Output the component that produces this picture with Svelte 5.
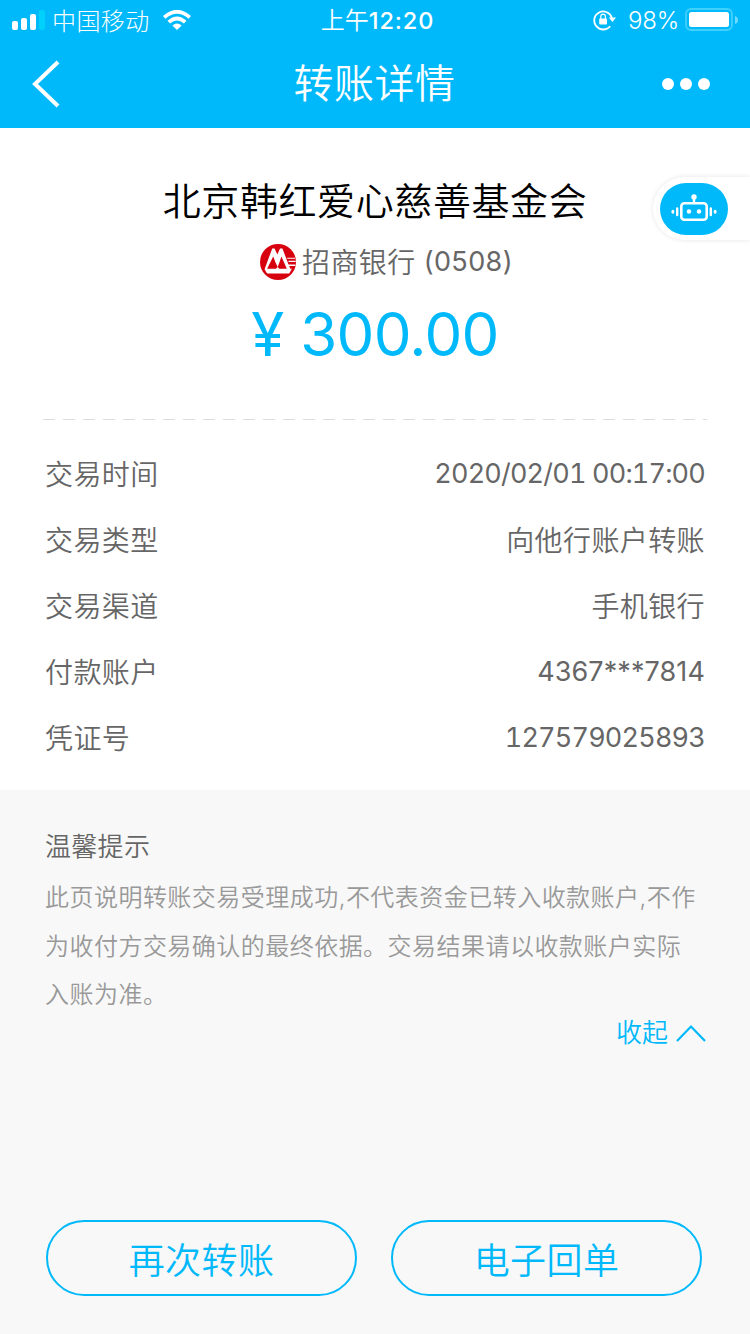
<script lang="ts">
	const rows = [
		{ label: '交易时间', value: '2020/02/01 00:17:00', kind: 'num' },
		{ label: '交易类型', value: '向他行账户转账', kind: 'text' },
		{ label: '交易渠道', value: '手机银行', kind: 'text' },
		{ label: '付款账户', value: '4367***7814', kind: 'masked' },
		{ label: '凭证号', value: '127579025893', kind: 'num' }
	];

	const tips = [
		'此页说明转账交易受理成功,不代表资金已转入收款账户,不作',
		'为收付方交易确认的最终依据。交易结果请以收款账户实际',
		'入账为准。'
	];

	let open = $state(true);
</script>

<div class="page">
	<header>
		<div class="statusbar">
			<div class="side">
				<svg class="signal" width="34" height="22" viewBox="0 0 34 22">
					<g fill="#fff">
						<rect x="0" y="12" width="6" height="9" rx="2" />
						<rect x="9" y="9" width="6" height="12" rx="2" />
						<rect x="18" y="5" width="6" height="16" rx="2" />
					</g>
					<rect x="27" y="1" width="6" height="20" rx="2" fill="#00d0fc" />
				</svg>
				<span class="carrier">中国移动</span>
				<svg class="wifi" width="28" height="20" viewBox="0 0 28 20">
					<g fill="none" stroke="#fff" stroke-width="3.8">
						<path d="M1.2 7.4Q14 -3.8 26.8 7.4" />
						<path d="M5.8 12.2Q14 4.8 22.2 12.2" />
					</g>
					<path d="M9.4 15.6Q14 11.4 18.6 15.6L14 20Z" fill="#fff" />
				</svg>
			</div>
			<div class="clock">上午<b>12:20</b></div>
			<div class="side right">
				<svg width="24" height="22" viewBox="0 0 24 22">
					<path d="M17.2 17.2A9 9 0 1 1 18.9 9" fill="none" stroke="#fff" stroke-width="1.8" />
					<path d="M15.8 8.6H23L19.4 13Z" fill="#fff" />
					<rect x="6.2" y="9.6" width="7.8" height="6" rx="0.8" fill="#fff" />
					<path d="M7.8 10V7.5a2.3 2.3 0 0 1 4.6 0V10" fill="none" stroke="#fff" stroke-width="1.2" />
				</svg>
				<span class="percent">98%</span>
				<svg width="54" height="24" viewBox="0 0 54 24">
					<rect x="1" y="1" width="46" height="21" rx="5" fill="none" stroke="#40d0fc" stroke-width="1.8" />
					<rect x="4" y="4" width="40" height="15" rx="2.5" fill="#fff" />
					<path d="M50 8q3 1 3 4t-3 4z" fill="#70d9fc" />
				</svg>
			</div>
		</div>
		<nav>
			<svg width="30" height="48" viewBox="0 0 30 48">
				<path d="M28 2L5 24L28 46" fill="none" stroke="#fff" stroke-width="4" />
			</svg>
			<h1>转账详情</h1>
			<svg width="48" height="12" viewBox="0 0 48 12" fill="#fff">
				<circle cx="6" cy="6" r="6" />
				<circle cx="24" cy="6" r="6" />
				<circle cx="42" cy="6" r="6" />
			</svg>
		</nav>
	</header>

	<section class="summary">
		<h2>北京韩红爱心慈善基金会</h2>
		<div class="bank">
			<svg width="36" height="36" viewBox="0 0 106 106">
				<circle cx="53" cy="53" r="53" fill="#d7000f" />
				<path d="M14 73L36 13H43L51 31L59 13H66L84 60H104V65H86L89 73H94L86 87H21L14 76Z" fill="#fff" />
				<path d="M21 73L39 37L46 55L52 68L57 55L63 37L79 73H57L52 68L47 73Z" fill="#d7000f" />
				<path d="M80 42H103M84 51H105" stroke="#fff" stroke-width="3.5" />
			</svg>
			<span class="bankname">招商银行</span>
			<span class="tail">(0508)</span>
		</div>
		<div class="amount"><span class="yen">¥</span><span>300.00</span></div>
		<button class="robot" aria-label="客服">
			<span class="bubble">
				<svg width="46" height="30" viewBox="0 0 46 30">
					<rect x="10.3" y="9.3" width="25.4" height="16.4" rx="3" fill="none" stroke="#fff" stroke-width="2.6" />
					<path d="M23 3V9M6.2 14.5V21M39.8 14.5V21" stroke="#fff" stroke-width="2.4" stroke-linecap="round" />
					<g fill="#fff">
						<circle cx="23" cy="3" r="2.7" />
						<circle cx="18" cy="17.5" r="2.2" />
						<circle cx="28" cy="17.5" r="2.2" />
						<ellipse cx="1.9" cy="17.7" rx="1.5" ry="2" />
						<ellipse cx="44.1" cy="17.7" rx="1.5" ry="2" />
					</g>
				</svg>
			</span>
		</button>
	</section>

	<section class="detail">
		<div class="divider"></div>
		{#each rows as row}
			<div class="row">
				<span class="text">{row.label}</span>
				<span class={row.kind}>{row.value}</span>
			</div>
		{/each}
	</section>

	<section class="notice">
		<h3>温馨提示</h3>
		{#if open}
			<div class="tips">
				{#each tips as line}
					<p>{line}</p>
				{/each}
			</div>
		{/if}
		<button class="toggle" onclick={() => (open = !open)}>
			<span>{open ? '收起' : '展开'}</span>
			<svg class:flip={!open} width="30" height="18" viewBox="0 0 30 18">
				<path d="M1 17L15 2.5L29 17" fill="none" stroke="#00b9fb" stroke-width="2.2" />
			</svg>
		</button>
		<div class="actions">
			<button>再次转账</button>
			<button>电子回单</button>
		</div>
	</section>
</div>

<style>
	:global(body) {
		margin: 0;
		background: #f8f8f8;
	}
	.page {
		width: 750px;
		height: 1334px;
		display: flex;
		flex-direction: column;
		overflow: hidden;
		background: #fff;
		font-family: Inter, 'Noto Sans CJK SC', sans-serif;
		font-weight: 350;
		color: #666;
	}
	svg {
		display: block;
		flex: none;
	}
	h1,
	h2,
	h3,
	p {
		margin: 0;
		font-weight: 350;
	}
	button {
		padding: 0;
		font: inherit;
		cursor: pointer;
	}
	header {
		height: 128px;
		background: #00b9fb;
		color: #fff;
	}
	.statusbar {
		height: 40px;
		padding: 0 11px 0 12px;
		display: grid;
		grid-template-columns: 1fr auto 1fr;
		align-items: center;
	}
	.side {
		display: flex;
		align-items: center;
	}
	.right {
		justify-content: flex-end;
	}
	.carrier {
		margin: -2px 0 0 6px;
		font-size: 24px;
		font-weight: 300;
		letter-spacing: 0.4px;
	}
	.wifi {
		margin-left: 13px;
	}
	.clock {
		padding-top: 1px;
		font-size: 24px;
		line-height: 39px;
		margin-left: 4px;
	}
	.clock b {
		font-weight: 500;
		font-size: 23.5px;
		letter-spacing: 0.9px;
	}
	.percent {
		margin: 0 6px 0 11px;
		font-size: 24px;
		font-weight: 300;
		letter-spacing: -0.2px;
	}
	nav {
		height: 88px;
		padding: 0 40px 0 30px;
		display: grid;
		grid-template-columns: 1fr auto 1fr;
		align-items: center;
	}
	nav svg:last-child {
		justify-self: end;
	}
	h1 {
		margin-left: 9px;
		font-size: 40px;
		line-height: 80px;
		letter-spacing: 0.5px;
	}
	.summary {
		position: relative;
		height: 291px;
		display: flex;
		flex-direction: column;
		align-items: center;
	}
	h2 {
		margin-top: 43px;
		font-size: 38px;
		line-height: 60px;
		letter-spacing: 0.6px;
		color: #000;
	}
	.bank {
		height: 40px;
		margin: 11px 0 0 23px;
		display: flex;
		align-items: center;
		font-size: 28px;
	}
	.bankname {
		margin: -3px 0 0 6px;
		letter-spacing: 0.4px;
	}
	.tail {
		margin: -2px 0 0 8px;
		font-size: 27px;
		font-weight: 400;
		letter-spacing: 0.4px;
	}
	.amount {
		margin-top: 12px;
		display: flex;
		font-size: 60px;
		line-height: 80px;
		font-weight: 400;
		letter-spacing: -0.7px;
		color: #00b9fb;
	}
	.yen {
		width: 49px;
	}
	.robot {
		position: absolute;
		top: 49px;
		right: 0;
		width: 97px;
		height: 63px;
		border: 0;
		border-radius: 32px 0 0 32px;
		background: #fff;
		box-shadow: 0 0 5px rgba(0, 0, 0, 0.1);
	}
	.bubble {
		width: 68px;
		height: 52px;
		margin-left: 7px;
		display: flex;
		align-items: center;
		justify-content: center;
		border-radius: 26px;
		background: #00b9fb;
	}
	.detail {
		height: 371px;
		padding: 0 45px;
		box-sizing: border-box;
	}
	.divider {
		height: 1px;
		margin: 0 -2px 20px;
		background: repeating-linear-gradient(90deg, #ddd 0 12px, transparent 12px 20px);
	}
	.row {
		height: 66px;
		display: flex;
		justify-content: space-between;
		align-items: center;
		font-size: 28px;
	}
	.text {
		padding-bottom: 1px;
		letter-spacing: 0.4px;
	}
	.num,
	.masked {
		font-size: 27px;
		font-weight: 400;
	}
	.num {
		font-variant-numeric: tabular-nums;
		letter-spacing: -0.82px;
	}
	.masked {
		letter-spacing: 0.1px;
	}
	.notice {
		flex: 1;
		padding: 37px 45px 38px;
		display: flex;
		flex-direction: column;
		background: #f8f8f8;
	}
	h3 {
		font-size: 26px;
		line-height: 40px;
		letter-spacing: 0.3px;
	}
	.tips {
		margin-top: 7px;
		font-size: 24px;
		line-height: 48.5px;
		letter-spacing: 0.47px;
		color: #999;
		white-space: nowrap;
	}
	.toggle {
		align-self: flex-end;
		margin: -4px -1px 0 0;
		display: flex;
		align-items: center;
		gap: 8px;
		border: 0;
		background: none;
		font-size: 26px;
		line-height: 34px;
		color: #00b9fb;
	}
	.flip {
		transform: rotate(180deg);
	}
	.actions {
		margin: auto -3px 0 1px;
		display: grid;
		grid-template-columns: 311px 311px;
		gap: 34px;
	}
	.actions button {
		height: 76px;
		border: 2px solid #00b9fb;
		border-radius: 38px;
		background: none;
		font-size: 36px;
		letter-spacing: 0.4px;
		color: #00b9fb;
	}
</style>
